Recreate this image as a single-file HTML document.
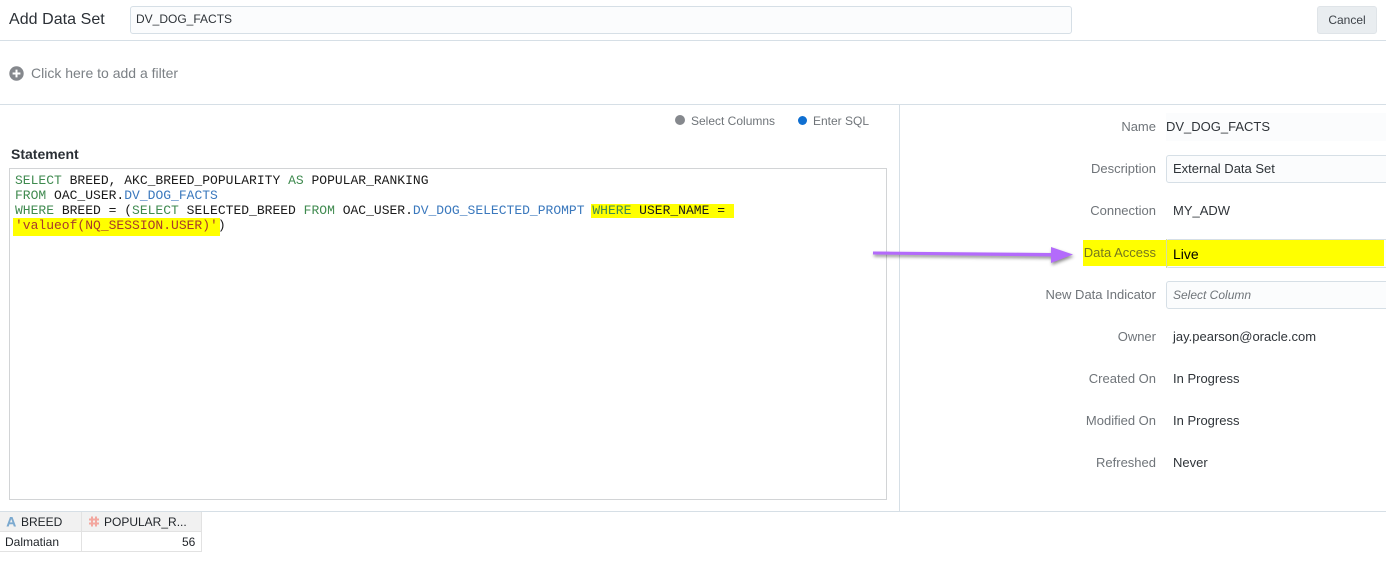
<!DOCTYPE html>
<html>
<head>
<meta charset="utf-8">
<style>
html,body{margin:0;padding:0;background:#fff}
#p{position:relative;width:1386px;height:571px;overflow:hidden;font-family:"Liberation Sans",sans-serif;background:#fff}
#p div,#p span.a{position:absolute;white-space:pre}
.l{right:230px;width:200px;text-align:right;font-size:13px;color:#6f7479;line-height:16px}
.v{left:1173px;font-size:13px;color:#2f3439;line-height:16px}
.in{left:1166px;width:240px;height:26px;border:1px solid #d6dfe6;border-radius:3px;background:#fbfcfd;box-sizing:border-box}
.c{left:15px;font:13px/15px "Liberation Mono",monospace;color:#1a1a1a}
.k{color:#3f8a4f}.b{color:#3a78bd}.s{color:#a8392c}
</style>
</head>
<body>
<div id="p">
<div style="left:9px;top:10px;font-size:16px;line-height:20px;color:#2b3036;letter-spacing:.05px">Add Data Set</div>
<div style="left:130px;top:6px;width:942px;height:28px;box-sizing:border-box;border:1px solid #d6dfe6;border-radius:3px;background:#fbfcfd"></div>
<div style="left:136px;top:11px;font-size:12px;line-height:16px;color:#2f3439">DV_DOG_FACTS</div>
<div style="left:1317px;top:6px;width:60px;height:28px;box-sizing:border-box;border:1px solid #dfe4e8;border-radius:3px;background:#e9edf0;text-align:center;font-size:12px;line-height:26px;color:#3d4248">Cancel</div>
<div style="left:0;top:40px;width:1386px;height:1px;background:#d6dfe6"></div>

<svg style="position:absolute;left:9px;top:66px" width="16" height="16" viewBox="0 0 16 16"><circle cx="7.5" cy="7.5" r="7.2" fill="#85888d"/><path d="M7.5 3.6v7.8M3.6 7.5h7.8" stroke="#fff" stroke-width="2"/></svg>
<div style="left:31px;top:65px;font-size:14px;line-height:16px;color:#7b8085">Click here to add a filter</div>
<div style="left:0;top:104px;width:1386px;height:1px;background:#d6dfe6"></div>
<div style="left:899px;top:105px;width:1px;height:406px;background:#d6dfe6"></div>

<div style="left:675px;top:115px;width:10px;height:10px;border-radius:50%;background:#85888d"></div>
<div style="left:691px;top:113px;font-size:12px;line-height:16px;color:#6f7479">Select Columns</div>
<div style="left:798px;top:116px;width:9px;height:9px;border-radius:50%;background:#0f6fd1"></div>
<div style="left:813px;top:113px;font-size:12px;line-height:16px;color:#6f7479">Enter SQL</div>

<div style="left:11px;top:146px;line-height:16px;font-weight:bold;color:#2b3036;font-size:14px">Statement</div>
<div style="left:9px;top:168px;width:878px;height:332px;box-sizing:border-box;border:1px solid #d2d4d6;background:#fff"></div>
<div style="left:591px;top:204px;width:143px;height:14px;background:#ffff00"></div>
<div style="left:13px;top:218px;width:207px;height:18px;background:#ffff00"></div>
<div class="c" style="top:173px"><span class="k">SELECT</span> BREED, AKC_BREED_POPULARITY <span class="k">AS</span> POPULAR_RANKING</div>
<div class="c" style="top:188px"><span class="k">FROM</span> OAC_USER.<span class="b">DV_DOG_FACTS</span></div>
<div class="c" style="top:203px"><span class="k">WHERE</span> BREED = (<span class="k">SELECT</span> SELECTED_BREED <span class="k">FROM</span> OAC_USER.<span class="b">DV_DOG_SELECTED_PROMPT</span> <span class="k">WHERE</span> USER_NAME =</div>
<div class="c" style="top:218px"><span class="s">'valueof(NQ_SESSION.USER)'</span>)</div>

<div class="l" style="left:956px;top:119px">Name</div>
<div style="left:1166px;top:113px;width:220px;height:28px;background:#fbfcfd"></div>
<div class="v" style="left:1166px;top:119px">DV_DOG_FACTS</div>
<div class="l" style="left:956px;top:161px">Description</div>
<div class="in" style="top:155px;height:28px"></div>
<div class="v" style="top:161px">External Data Set</div>
<div class="l" style="left:956px;top:203px">Connection</div>
<div class="v" style="top:203px">MY_ADW</div>

<div class="in" style="top:239px;height:29px"></div>
<div style="left:1083px;top:240px;width:301px;height:26px;background:#ffff00"></div>
<div class="l" style="left:956px;top:245px;color:#77781e">Data Access</div>
<div style="left:1166px;top:239px;width:1px;height:29px;background:#d6dfa0"></div>
<div class="v" style="top:246px;font-size:14px;color:#000">Live</div>

<div class="l" style="left:956px;top:287px">New Data Indicator</div>
<div class="in" style="top:281px;height:28px"></div>
<div class="v" style="top:287px;font-style:italic;color:#6f7479;font-size:12px">Select Column</div>
<div class="l" style="left:956px;top:329px">Owner</div>
<div class="v" style="top:329px">jay.pearson@oracle.com</div>
<div class="l" style="left:956px;top:371px">Created On</div>
<div class="v" style="top:371px">In Progress</div>
<div class="l" style="left:956px;top:413px">Modified On</div>
<div class="v" style="top:413px">In Progress</div>
<div class="l" style="left:956px;top:455px">Refreshed</div>
<div class="v" style="top:455px">Never</div>

<svg style="position:absolute;left:870px;top:242px;filter:drop-shadow(1px 2px 1.5px rgba(0,0,0,.45))" width="220" height="30" viewBox="0 0 220 30">
<path d="M3 9.5 L181 11 L181 5 L203 12.5 L181 21 L181 14.5 L3 12.5 Z" fill="#b36bfb"/>
</svg>

<div style="left:0;top:511px;width:1386px;height:1px;background:#d6dfe6"></div>
<div style="left:0;top:512px;width:201px;height:19px;background:#f1f1f1"></div>
<div style="left:81px;top:512px;width:1px;height:39px;background:#e2e2e2"></div>
<div style="left:201px;top:512px;width:1px;height:39px;background:#e2e2e2"></div>
<div style="left:0;top:531px;width:201px;height:1px;background:#e2e2e2"></div>
<div style="left:0;top:551px;width:202px;height:1px;background:#e2e2e2"></div>
<svg style="position:absolute;left:6px;top:516px" width="11" height="11" viewBox="0 0 11 11"><path d="M0.5 10.5 L4 1 H6.5 L10 10.5 H7.8 L7.1 8.2 H3.4 L2.7 10.5 Z M4 6.4 H6.5 L5.25 3 Z" fill="#7ba9cf" fill-rule="evenodd"/></svg>
<div style="left:21px;top:514px;font-size:12px;line-height:16px;color:#1f2328">BREED</div>
<svg style="position:absolute;left:89px;top:516px" width="10" height="11" viewBox="0 0 10 11"><path d="M3 .5V10.5M7 .5V10.5M0 3.5H10M0 7.5H10" stroke="#f3a79f" stroke-width="2" fill="none"/></svg>
<div style="left:104px;top:514px;font-size:12px;line-height:16px;color:#1f2328">POPULAR_R...</div>
<div style="left:5px;top:534px;font-size:12px;line-height:16px;color:#1f2328">Dalmatian</div>
<div style="left:182px;top:534px;font-size:12px;line-height:16px;color:#1f2328">56</div>
</div>
</body>
</html>
